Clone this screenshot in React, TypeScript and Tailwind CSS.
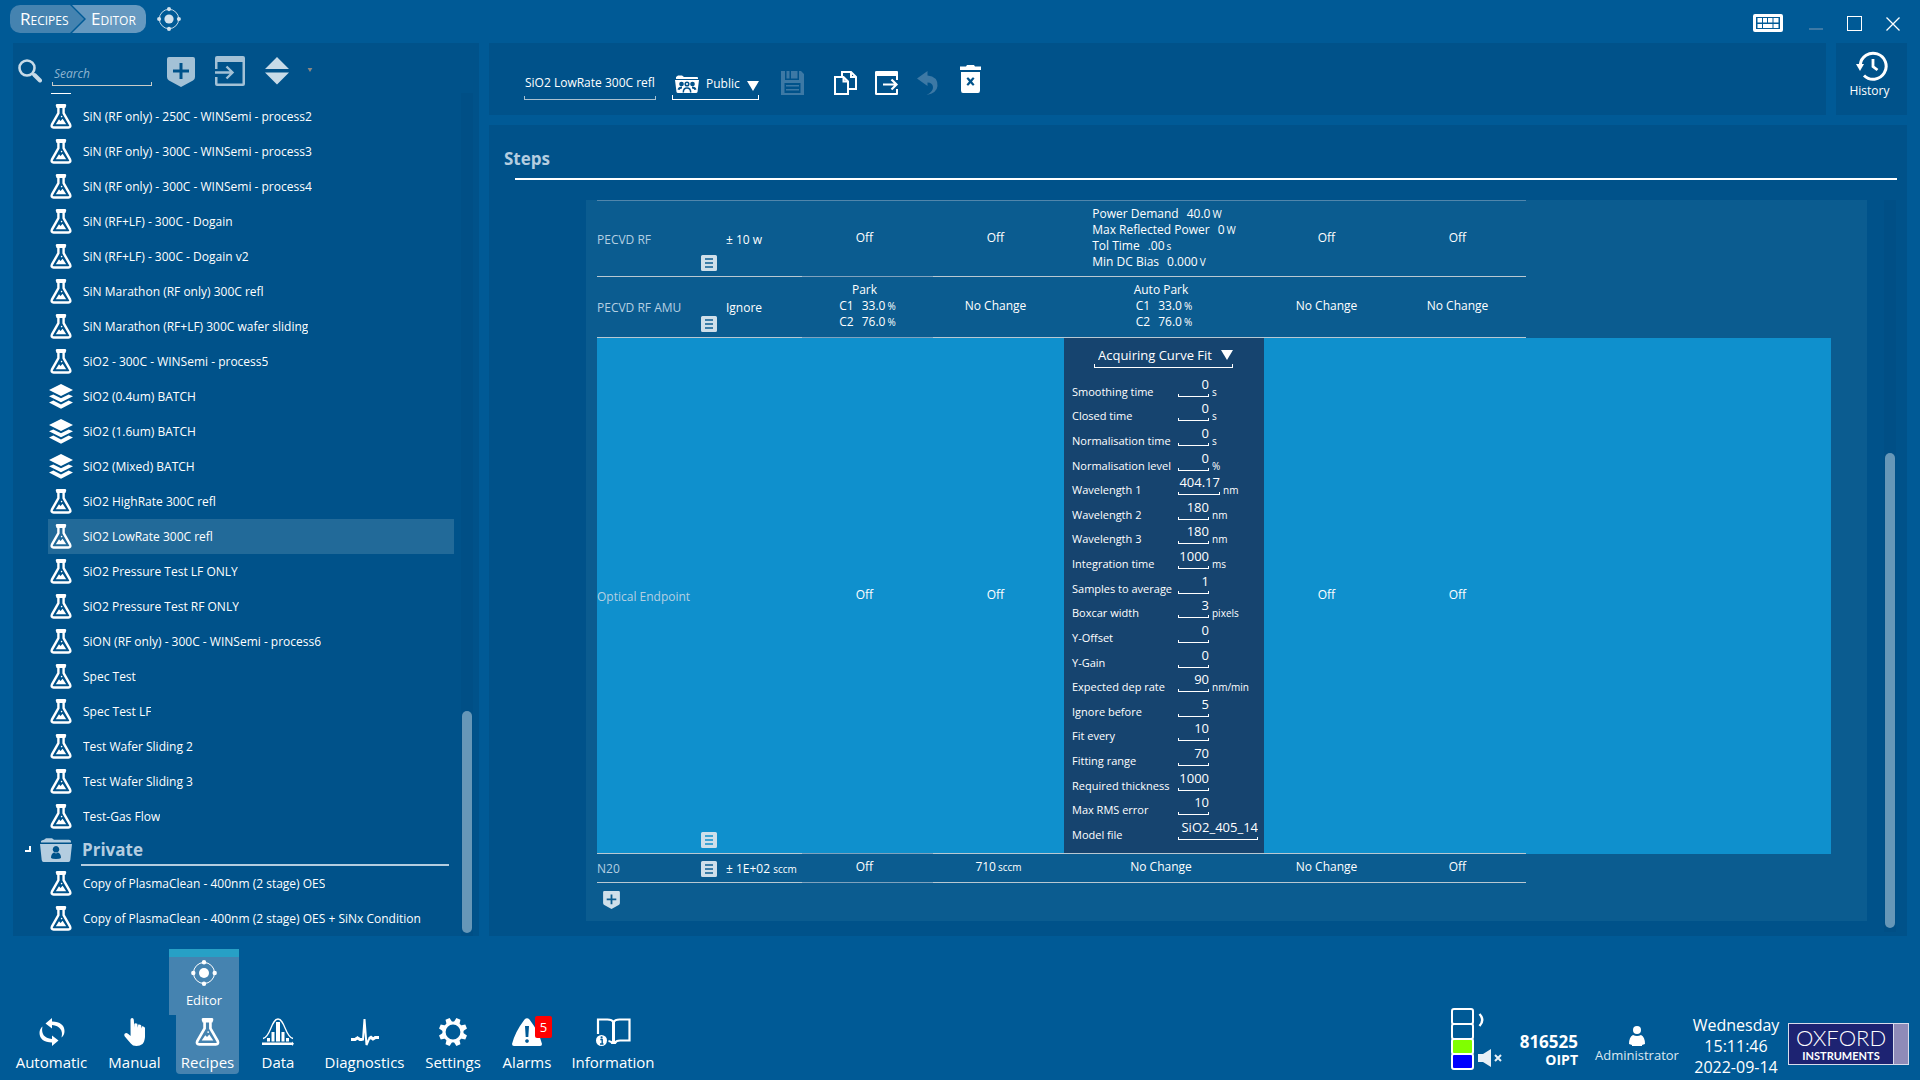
import React from "react";

/* ---------- icons ---------- */

type IconProps = { className?: string };

const Flask = ({ className = "" }: IconProps) => (
  <svg viewBox="0 0 22 25" className={className} fill="none" aria-hidden="true">
    <path d="M8.4 2.5V9.2L1.9 20.6Q.8 23.4 3.6 23.5H18.4Q21.2 23.4 20.1 20.6L13.6 9.2V2.5" stroke="currentColor" strokeWidth="2.4" />
    <path d="M6.8 0H15.2Q16.4 0 16.2 1.8L15.4 4H6.6L5.8 1.8Q5.6 0 6.8 0Z" fill="currentColor" />
    <path d="M5.8 20.2L9 15.3L10.6 17L12.6 14.8L16.2 20.2Z" fill="currentColor" />
    <circle cx="11.6" cy="12.6" r=".8" fill="currentColor" />
  </svg>
);

const Layers = ({ className = "" }: IconProps) => (
  <svg viewBox="0 0 24 25" className={className} fill="currentColor" aria-hidden="true">
    <path d="M12 0L24 6L12 12L0 6Z" />
    <path d="M0 12.3L4.3 10.4L12 14.2L19.7 10.4L24 12.3L12 18.3Z" />
    <path d="M0 18.6L4.3 16.6L12 20.5L19.7 16.6L24 18.6L12 24.8Z" />
  </svg>
);

const Orbit = ({ className = "" }: IconProps) => (
  <svg viewBox="0 0 26 26" className={className} aria-hidden="true">
    <circle cx="13" cy="13" r="10.5" fill="none" stroke="currentColor" strokeWidth="1" />
    <g fill="currentColor">
      <circle cx="13" cy="13" r="5" />
      <circle cx="13" cy="2.3" r="2.2" />
      <circle cx="13" cy="23.7" r="2.2" />
      <circle cx="2.3" cy="13" r="2.2" />
      <circle cx="23.7" cy="13" r="2.2" />
    </g>
  </svg>
);

const Shield = ({ className = "" }: IconProps) => (
  <svg viewBox="0 0 28 30" className={className} fill="currentColor" aria-hidden="true">
    <path fillRule="evenodd" d="M2 0H26Q28 0 28 2V20Q28 22.5 26 23.5L14 30L2 23.5Q0 22.5 0 20V2Q0 0 2 0ZM12.5 6V12.5H6V15.5H12.5V22H15.5V15.5H22V12.5H15.5V6Z" />
  </svg>
);

const Note = ({ className = "" }: IconProps) => (
  <svg viewBox="0 0 16 16" className={className} fill="currentColor" aria-hidden="true">
    <path fillRule="evenodd" d="M1.5 0H14.5Q16 0 16 1.5V14.5Q16 16 14.5 16H1.5Q0 16 0 14.5V1.5Q0 0 1.5 0ZM4 3.3V4.7H12V3.3ZM4 7.3V8.7H12V7.3ZM4 11.3V12.7H12V11.3Z" />
  </svg>
);

const Triangle = ({ className = "" }: IconProps) => (
  <svg viewBox="0 0 12 10" className={className} fill="currentColor" aria-hidden="true">
    <path d="M0 0H12L6 10Z" />
  </svg>
);

const SearchIcon = () => (
  <svg viewBox="0 0 24 24" className="size-6" fill="none" stroke="currentColor" aria-hidden="true">
    <circle cx="9" cy="9" r="7.5" strokeWidth="2.6" />
    <path d="M14 14.5L16 16.5" strokeWidth="2" />
    <path d="M16.5 16L22 21.5" strokeWidth="4" strokeLinecap="round" />
  </svg>
);

const ImportIcon = () => (
  <svg viewBox="0 0 30 30" className="size-[30px]" aria-hidden="true">
    <path fillRule="evenodd" fill="currentColor" d="M0 13V2Q0 0 2 0H28Q30 0 30 2V28Q30 30 28 30H2Q0 30 0 28V21H2.5V27.5H27.5V6H2.5V13Z" />
    <path d="M0 16.5H16M11.5 10.5L17.5 16.5L11.5 22.5" fill="none" stroke="currentColor" strokeWidth="2.4" />
  </svg>
);

const SortIcon = () => (
  <svg viewBox="0 0 24 28" className="h-7 w-6" fill="currentColor" aria-hidden="true">
    <path d="M12 0L24 12H0ZM0 15.5H24L12 27.5Z" />
  </svg>
);

const KeyboardIcon = () => (
  <svg viewBox="0 0 30 18" className="h-[18px] w-[30px]" aria-hidden="true">
    <path fill="currentColor" fillRule="evenodd" d="M2 0H28Q30 0 30 2V16Q30 18 28 18H2Q0 18 0 16V2Q0 0 2 0ZM3 3V15H27V3Z" />
    <path fill="currentColor" d="M4.5 4H9V8.5H4.5ZM10 4H14V8.5H10ZM15 4H19.5V8.5H15ZM20.5 4H25.5V8.5H20.5ZM4.5 10H9V14H4.5ZM10 10H19.5V14H10ZM20.5 10H25.5V14H20.5Z" />
  </svg>
);

const GroupFolder = () => (
  <svg viewBox="0 0 24 20" className="h-5 w-6 shrink-0" fill="currentColor" aria-hidden="true">
    <path d="M1 4V3L3 1.5H7L9 3H22Q23 3 23 4V5H1Z" />
    <path fillRule="evenodd" d="M0 6H24L22.500 18Q22.3 19 21 19H3Q1.700 19 1.500 18Z" mask="url(#group-folder-cut)" />
    <mask id="group-folder-cut">
      <rect width="24" height="20" fill="#fff" />
      <g fill="none" stroke="#000" strokeWidth="1.5">
        <circle cx="12" cy="10" r="1.800" />
        <circle cx="6.500" cy="10" r="1.600" fill="#000" />
        <circle cx="17.500" cy="10" r="1.600" fill="#000" />
        <path d="M8.300 18.500Q8.300 14 12 14T15.700 18.500" />
        <path d="M3.500 15.800Q4 13.500 7 13.500M20.500 15.800Q20 13.500 17 13.500" strokeWidth="2" />
      </g>
    </mask>
  </svg>
);

const UserFolder = () => (
  <svg viewBox="0 0 32 24" className="h-6 w-8 shrink-0" fill="currentColor" aria-hidden="true">
    <path d="M1 4.5V3Q2 2 4 1.8L6 .3H12L14 1.8H29Q31 2 31 3.5V4.5Z" />
    <path fillRule="evenodd" d="M0 6H32L30.3 22Q30 24 28.5 24H3.5Q2 24 1.7 22ZM16 8A3.3 3.3 0 1 0 16.01 8ZM11 20Q11 15.5 14 14.5L16 15.5L18 14.5Q21 15.5 21 20Q20 21 16 21T11 20Z" />
  </svg>
);

const SaveIcon = () => (
  <svg viewBox="0 0 23 24" className="h-6 w-[23px]" fill="currentColor" aria-hidden="true">
    <path fillRule="evenodd" d="M0 0H4V9H18V0H20L23 3V24H0ZM3.5 12V22H19.5V12ZM5 14H18V15.5H5ZM5 18H18V19.5H5Z" />
    <path d="M5.5 0H8.5V7.5H5.5ZM10 0H16.5V7.5H10Z" />
  </svg>
);

const CopyIcon = () => (
  <svg viewBox="0 0 23 24" className="h-6 w-[23px]" fill="none" stroke="currentColor" strokeWidth="2" aria-hidden="true">
    <path d="M1 6H9.5L14 10.5V23H1ZM9.5 6V10.5H14" />
    <path d="M8 5V1H17L22 6V18H15M17 1V6H22" />
  </svg>
);

const ExportIcon = () => (
  <svg viewBox="0 0 24 24" className="size-6" aria-hidden="true">
    <path fillRule="evenodd" fill="currentColor" d="M1.5 0H22Q23 0 23 1V9H21V5H2V22H21V18H23V23Q23 24 22 24H1.5Q0 24 0 23V1Q0 0 1.5 0Z" />
    <path d="M8 13.5H21M16.5 8.5L21.5 13.5L16.5 18.5" fill="none" stroke="currentColor" strokeWidth="2.2" />
  </svg>
);

const UndoIcon = () => (
  <svg viewBox="0 0 21 24" className="h-6 w-[21px]" fill="currentColor" aria-hidden="true">
    <path d="M0 7.5L10.5 0V4.5Q21 5.5 20.5 15Q20 22 9.5 24Q16.5 20.5 16 16Q15.5 11.500 10.500 11.500V15Z" />
  </svg>
);

const TrashIcon = () => (
  <svg viewBox="0 0 21 28" className="h-7 w-[21px]" fill="currentColor" aria-hidden="true">
    <path d="M0 1.5H6L7 0H14L15 1.5H21V5H0Z" />
    <path fillRule="evenodd" d="M1 7H20V25.5Q20 28 18 28H3Q1 28 1 25.5ZM7.500 12.500L6.500 13.500L9 16.500L6.500 19.500L7.500 20.500H8.500L10.500 18.200L12.500 20.500H13.500L14.500 19.500L12 16.500L14.500 13.500L13.500 12.500H12.500L10.500 14.800L8.500 12.500Z" />
  </svg>
);

const HistoryIcon = () => (
  <svg viewBox="0 0 32 30" className="ml-1 h-[30px] w-8" fill="none" stroke="currentColor" aria-hidden="true">
    <path d="M4.2 14A13 13 0 1 1 8 24.5" strokeWidth="3" />
    <path d="M17 8V15.5L21.5 19" strokeWidth="2.8" />
    <path d="M0 13H8L4 20Z" fill="currentColor" stroke="none" />
  </svg>
);

const AutomaticIcon = () => (
  <svg viewBox="0 0 26 28" className="h-7 w-[26px]" fill="currentColor" aria-hidden="true">
    <path d="M6.500 5.500L13 0V3.500Q25.300 4 25.500 13Q25.500 17 22.500 19.500Q25 8.500 13 7V10.500Z" />
    <path d="M19.500 22.500L13 28V24.500Q.7 24 .5 15Q.5 11 3.500 8.500Q1 19.500 13 21V17.500Z" />
  </svg>
);

const HandIcon = () => (
  <svg viewBox="0 0 22 28" className="h-7 w-[22px]" fill="currentColor" aria-hidden="true">
    <path d="M6.5 1.8Q6.6 0 8.1 0T9.8 1.8L10.4 9.5V5.7Q11.5 4.8 13.3 5.8L13.8 9.8L14.2 6.6Q15.7 6 17.2 7.2L17.3 10.5L18 8.2Q20 8 21 9.8V19Q20.5 24 18.5 26Q16 28 12.5 28Q8.5 28 6.8 25.5L.8 18.5Q-.3 16.5 1 15.5T4.3 16L6.6 18Z" />
  </svg>
);

const DataIcon = () => (
  <svg viewBox="0 0 32 28" className="h-7 w-8" fill="currentColor" aria-hidden="true">
    <path d="M0 24.5H30V23.500L32 25.700L30 28V27H0Z" />
    <path d="M5 20H8V23.5H5ZM9.5 14H12.5V23.5H9.5ZM14 4H18V23.5H14ZM19.5 14H22.5V23.5H19.5ZM24 20H27V23.5H24Z" />
    <path d="M1 20.5C9 19 9 1 16 1S23 19 31 20.5" fill="none" stroke="currentColor" strokeWidth="1.3" />
  </svg>
);

const PulseIcon = () => (
  <svg viewBox="0 0 28 28" className="size-7" fill="none" stroke="currentColor" aria-hidden="true">
    <path d="M0 21.5H4L6.5 19.5L9 21.5H12L13.5 1L15.5 27L18 21L20 19L22 21L24.5 19L28 19.5" strokeWidth="2" />
    <path d="M0 21.5H4L6.5 20L9 21.5H11.5M18 20.500L20 19.500L22 21L24.500 19.500H28" strokeWidth="3" />
  </svg>
);

const GearIcon = () => (
  <svg viewBox="-14 -14 28 28" className="size-7" fill="currentColor" aria-hidden="true">
    <circle r="9" fill="none" stroke="currentColor" strokeWidth="3.2" />
    {[22.5, 67.5, 112.5, 157.5, 202.5, 247.5, 292.5, 337.5].map((a) => (
      <path key={a} d="M-2.2 -14.2H2.2L3 -9.5H-3Z" transform={`rotate(${a})`} />
    ))}
  </svg>
);

const AlarmIcon = () => (
  <svg viewBox="0 0 30 28" className="h-7 w-[30px]" fill="currentColor" aria-hidden="true">
    <path fillRule="evenodd" d="M12.5 1.5Q15 -1 17.5 1.5Q27 14 30 26Q30 27.8 28 28H2Q0 27.8 0 26Q3 14 12.5 1.5ZM13 8L13.7 19H16.3L17 8ZM15 21.2A1.8 1.8 0 1 0 15.01 21.2Z" />
  </svg>
);

const BookIcon = () => (
  <svg viewBox="0 0 35 28" className="h-7 w-[35px]" aria-hidden="true">
    <path d="M2 16V1.5H11.5Q16 1.5 17.5 4Q19 1.5 23.5 1.5H33.5V22.5H24Q20 22.5 19 25H16Q15.5 23.5 12.5 23" fill="none" stroke="currentColor" strokeWidth="2.2" />
    <path d="M16 3H19V25H16Z" fill="currentColor" />
    <circle cx="5.5" cy="22.5" r="5.5" fill="currentColor" />
    <path d="M4.3 21.5H6.2V26M4 26H7.5" stroke="#005a96" strokeWidth="1.4" fill="none" />
    <circle cx="5.6" cy="19.3" r="1.1" fill="#005a96" />
  </svg>
);

const LightTower = () => (
  <svg viewBox="0 0 52 62" className="h-[62px] w-[52px]" aria-hidden="true">
    <g stroke="#fff" strokeWidth="2">
      <rect x="1" y="1" width="21" height="15" rx="2" fill="none" />
      <rect x="1" y="16" width="21" height="15" rx="2" fill="none" />
      <rect x="1" y="31" width="21" height="15" rx="2" fill="#80ff00" />
      <rect x="1" y="46" width="21" height="15" rx="2" fill="#0000ff" />
    </g>
    <path d="M28.500 6Q34 12 28.500 18" fill="none" stroke="#fff" strokeWidth="2.4" />
    <path d="M27 46H32L40 41V59L32 54H27Z" fill="#e8f0f6" />
    <path d="M44 47L50 53M50 47L44 53" stroke="#e8f0f6" strokeWidth="2" />
  </svg>
);

const PersonIcon = () => (
  <svg viewBox="0 0 16 20" className="h-5 w-4" fill="currentColor" aria-hidden="true">
    <circle cx="8" cy="4" r="4" />
    <path d="M4 9Q8 11 12 9Q16 11 16 18L13 19V20H3V19L0 18Q0 11 4 9Z" />
  </svg>
);

/* ---------- shared parts ---------- */

const Bracket = ({ className = "border-white" }: IconProps) => (
  <span aria-hidden="true" className={`block border-x border-b ${className}`} />
);

/* ---------- data ---------- */

const recipes: { name: string; batch?: boolean; selected?: boolean }[] = [
  { name: "SiN (RF only) - 250C - WINSemi - process2" },
  { name: "SiN (RF only) - 300C - WINSemi - process3" },
  { name: "SiN (RF only) - 300C - WINSemi - process4" },
  { name: "SiN (RF+LF) - 300C - Dogain" },
  { name: "SiN (RF+LF) - 300C - Dogain v2" },
  { name: "SiN Marathon (RF only) 300C refl" },
  { name: "SiN Marathon (RF+LF) 300C wafer sliding" },
  { name: "SiO2 - 300C - WINSemi - process5" },
  { name: "SiO2 (0.4um) BATCH", batch: true },
  { name: "SiO2 (1.6um) BATCH", batch: true },
  { name: "SiO2 (Mixed) BATCH", batch: true },
  { name: "SiO2 HighRate 300C refl" },
  { name: "SiO2 LowRate 300C refl", selected: true },
  { name: "SiO2 Pressure Test LF ONLY" },
  { name: "SiO2 Pressure Test RF ONLY" },
  { name: "SiON (RF only) - 300C - WINSemi - process6" },
  { name: "Spec Test" },
  { name: "Spec Test LF" },
  { name: "Test Wafer Sliding 2" },
  { name: "Test Wafer Sliding 3" },
  { name: "Test-Gas Flow" },
];

const privateRecipes = [
  { name: "Copy of PlasmaClean - 400nm (2 stage) OES" },
  { name: "Copy of PlasmaClean - 400nm (2 stage) OES + SiNx Condition" },
];

const fields: { label: string; value: string; unit?: string; width?: string }[] = [
  { label: "Smoothing time", value: "0", unit: "s" },
  { label: "Closed time", value: "0", unit: "s" },
  { label: "Normalisation time", value: "0", unit: "s" },
  { label: "Normalisation level", value: "0", unit: "%" },
  { label: "Wavelength 1", value: "404.17", unit: "nm", width: "w-[42px]" },
  { label: "Wavelength 2", value: "180", unit: "nm" },
  { label: "Wavelength 3", value: "180", unit: "nm" },
  { label: "Integration time", value: "1000", unit: "ms" },
  { label: "Samples to average", value: "1" },
  { label: "Boxcar width", value: "3", unit: "pixels" },
  { label: "Y-Offset", value: "0" },
  { label: "Y-Gain", value: "0" },
  { label: "Expected dep rate", value: "90", unit: "nm/min" },
  { label: "Ignore before", value: "5" },
  { label: "Fit every", value: "10" },
  { label: "Fitting range", value: "70" },
  { label: "Required thickness", value: "1000" },
  { label: "Max RMS error", value: "10" },
  { label: "Model file", value: "SiO2_405_14", width: "w-20" },
];

/* ---------- recipe list ---------- */

const RecipeRow = ({ name, batch, selected }: { name: string; batch?: boolean; selected?: boolean }) => (
  <li className="pl-[35px] pr-[7px]">
    <button className={`flex h-[35px] w-full items-center text-left text-xs ${selected ? "bg-[#226a99]" : ""}`}>
      <span className="flex w-[35px] shrink-0 pl-px">
        {batch ? <Layers className="h-[25px] w-6" /> : <Flask className="ml-px h-[25px] w-[22px]" />}
      </span>
      <span className="truncate">{name}</span>
    </button>
  </li>
);

const Sidebar = () => (
  <aside className="flex w-[466px] shrink-0 flex-col bg-[#00528a]">
    <div className="flex h-[50px] items-start pl-[5px] pt-[13px] text-[#c8dbe8]">
      <label htmlFor="search" className="mt-[3px]">
        <SearchIcon />
        <span className="sr-only">Search recipes</span>
      </label>
      <div className="ml-2.5 mt-1.5 w-[100px]">
        <input id="search" placeholder="Search" className="block h-5 w-full bg-transparent pl-0.5 pt-0.5 text-xs italic text-white outline-none placeholder:text-[#8db4d0]" />
        <Bracket className="h-1 border-[#c9ccc8]" />
      </div>
      <button aria-label="Add recipe" className="ml-[15px] mt-px text-[#a3c1d6]"><Shield className="h-[30px] w-7" /></button>
      <button aria-label="Import recipe" className="ml-5 text-[#a3c1d6]"><ImportIcon /></button>
      <button aria-label="Sort recipes" className="ml-5 mt-px"><SortIcon /></button>
      <button aria-label="Sort options" className="ml-[18px] mt-3 text-[#8c8781]"><Triangle className="h-1 w-1.5" /></button>
    </div>
    <div className="flex flex-1">
      <div className="min-w-0 flex-1">
        <div className="flex h-1.5 pl-[38px]"><span className="h-px w-5 bg-white" /></div>
        <ul>
          {recipes.map((r) => <RecipeRow key={r.name} {...r} />)}
        </ul>
        <div className="flex h-8 items-start pl-3 pr-3 text-[#b4cde0]">
          <span aria-hidden="true" className="mt-3 size-1.5 border-b-2 border-r-2 border-white" />
          <span className="ml-[9px] mt-1 flex"><UserFolder /></span>
          <h2 className="ml-[9px] flex-1 border-b-2 border-[#b4cde0] pl-px pt-0.5 text-[17px] font-bold leading-7">Private</h2>
        </div>
        <ul>
          {privateRecipes.map((r) => <RecipeRow key={r.name} {...r} />)}
        </ul>
      </div>
      <div className="mr-1.5 flex w-3 flex-col items-center justify-end bg-[#004f86] pb-[3px]">
        <div className="h-[222px] w-2.5 rounded-full bg-[#6697b8]" />
      </div>
    </div>
  </aside>
);

/* ---------- recipe toolbar ---------- */

const RecipeToolbar = () => (
  <div className="flex h-[72px] flex-1 items-start bg-[#00528a] pl-[35px] pt-[22px]">
    <div className="mt-[7px] w-[132px]">
      <input aria-label="Recipe name" defaultValue="SiO2 LowRate 300C refl" className="block h-5 w-full bg-transparent pl-px text-xs outline-none" />
      <Bracket className="mt-1 h-1 border-[#a9c0d0]" />
    </div>
    <div className="ml-4 mt-2 w-[87px]">
      <div className="relative flex h-[22px] items-center">
        <span className="ml-[3px] flex"><GroupFolder /></span>
        <select aria-label="Visibility" className="h-[22px] min-w-0 flex-1 appearance-none bg-transparent pl-[7px] text-xs outline-none">
          <option className="bg-[#00528a]">Public</option>
          <option className="bg-[#00528a]">Private</option>
        </select>
        <Triangle className="pointer-events-none absolute right-0 top-2 h-2.5 w-3" />
      </div>
      <Bracket className="h-[5px]" />
    </div>
    <button aria-label="Save" className="ml-[22px] mt-1.5 text-[#3d79a5]"><SaveIcon /></button>
    <button aria-label="Copy" className="ml-[30px] mt-1.5"><CopyIcon /></button>
    <button aria-label="Export" className="ml-[18px] mt-1.5"><ExportIcon /></button>
    <button aria-label="Undo" className="ml-[18px] mt-1.5 text-[#3d79a5]"><UndoIcon /></button>
    <button aria-label="Delete" className="ml-[22px]"><TrashIcon /></button>
  </div>
);

/* ---------- step table ---------- */

const Measure = ({ label, value, unit }: { label: string; value: string; unit: string }) => (
  <div className="pl-1.5">
    {label}<span className="ml-2">{value}</span><span className="ml-0.5 text-[10px]">{unit}</span>
  </div>
);

const noteCell = "border-b border-[#b9c8d2] pb-[5px] align-bottom";
const labelCell = "border-b border-[#b9c8d2] pt-0.5 text-left font-normal whitespace-nowrap text-[#b4cfe2]";
const tolCell = "border-b border-[#b9c8d2] pt-0.5 whitespace-nowrap";
const dimCell = "border-b border-[#7fa2be] pr-1.5 pb-0.5 text-center";
const valueCell = "border-b border-[#b9c8d2] pr-1.5 pb-0.5 text-center";

const NoteButton = ({ row }: { row: string }) => (
  <button aria-label={`Notes for ${row}`} className="block text-[#cfdfea]"><Note className="size-4" /></button>
);

const EndpointForm = () => (
  <div className="pb-2.5 pl-2 pt-2 text-left">
    <div className="relative ml-[22px] w-[139px]">
      <select aria-label="Endpoint mode" className="block h-[18px] w-full appearance-none bg-transparent pl-1 text-[13px] leading-[18px] outline-none">
        <option className="bg-[#16446f]">Acquiring Curve Fit</option>
        <option className="bg-[#16446f]">Off</option>
      </select>
      <Triangle className="pointer-events-none absolute right-0 top-1 h-2.5 w-3" />
      <Bracket className="h-1" />
    </div>
    <div className="mt-[7px] flex h-[468px] flex-col">
      {fields.map((f, i) => (
        <div key={f.label} className="flex flex-1 items-end whitespace-nowrap">
          <label htmlFor={`field-${i}`} className="w-[106px] shrink-0 text-[11px] leading-4">{f.label}</label>
          <div className={`mb-[3px] shrink-0 ${f.width ?? "w-[31px]"}`}>
            <input id={`field-${i}`} defaultValue={f.value} className="block h-[17px] w-full bg-transparent text-right text-[13px] leading-[17px] outline-none" />
            <Bracket className="mt-px h-[3px]" />
          </div>
          <span className="ml-[3px] text-[10px] leading-[15px]">{f.unit}</span>
        </div>
      ))}
    </div>
  </div>
);

const StepTable = () => (
  <table className="w-full table-fixed border-separate border-spacing-0 text-xs leading-4">
    <colgroup>
      <col className="w-[104px]" />
      <col className="w-[25px]" />
      <col className="w-[76px]" />
      <col className="w-[131px]" />
      <col className="w-[131px]" />
      <col className="w-[200px]" />
      <col className="w-[131px]" />
      <col className="w-[131px]" />
      <col />
    </colgroup>
    <tbody>
      <tr className="h-[77px] [&>*:not(:last-child)]:border-t [&>*]:border-t-[#5186ac]">
        <th scope="row" className={labelCell}>PECVD RF</th>
        <td className={noteCell}><NoteButton row="PECVD RF" /></td>
        <td className={tolCell}>± 10 w</td>
        <td className={dimCell}>Off</td>
        <td className={valueCell}>Off</td>
        <td className={valueCell}>
          <div className="inline-block text-left align-middle">
            <Measure label="Power Demand" value="40.0" unit="W" />
            <Measure label="Max Reflected Power" value="0" unit="W" />
            <Measure label="Tol Time" value=".00" unit="s" />
            <Measure label="Min DC Bias" value="0.000" unit="V" />
          </div>
        </td>
        <td className={valueCell}>Off</td>
        <td className={valueCell}>Off</td>
        <td />
      </tr>
      <tr className="h-[61px]">
        <th scope="row" className={labelCell}>PECVD RF AMU</th>
        <td className={noteCell}><NoteButton row="PECVD RF AMU" /></td>
        <td className={tolCell}>Ignore</td>
        <td className={dimCell}>
          <div>Park</div>
          <Measure label="C1" value="33.0" unit="%" />
          <Measure label="C2" value="76.0" unit="%" />
        </td>
        <td className={valueCell}>No Change</td>
        <td className={valueCell}>
          <div>Auto Park</div>
          <Measure label="C1" value="33.0" unit="%" />
          <Measure label="C2" value="76.0" unit="%" />
        </td>
        <td className={valueCell}>No Change</td>
        <td className={valueCell}>No Change</td>
        <td />
      </tr>
      <tr className="bg-[#0f90cd]">
        <th scope="row" className={labelCell}>Optical Endpoint</th>
        <td className={noteCell}><NoteButton row="Optical Endpoint" /></td>
        <td className={tolCell} />
        <td className={dimCell}>Off</td>
        <td className={valueCell}>Off</td>
        <td className="border-b border-[#b9c8d2] bg-[#16446f]"><EndpointForm /></td>
        <td className={valueCell}>Off</td>
        <td className={valueCell}>Off</td>
        <td />
      </tr>
      <tr className="h-[29px]">
        <th scope="row" className={labelCell}>N20</th>
        <td className={noteCell}><NoteButton row="N20" /></td>
        <td className={tolCell}>± 1E+02 <span className="text-[10px]">sccm</span></td>
        <td className={dimCell}>Off</td>
        <td className={valueCell}><span className="pl-1.5">710</span><span className="ml-0.5 text-[10px]">sccm</span></td>
        <td className={valueCell}>No Change</td>
        <td className={valueCell}>No Change</td>
        <td className={valueCell}>Off</td>
        <td />
      </tr>
    </tbody>
  </table>
);

const StepsPanel = () => (
  <section className="flex flex-1 flex-col bg-[#00528a] pb-1 pr-2.5">
    <h1 className="pl-[15px] pt-[21px] text-[17px] font-bold leading-[26px] text-[#b4cde0]">Steps</h1>
    <div className="ml-[26px] mt-1.5 h-0.5 bg-white" />
    <div className="ml-[97px] mt-5 flex flex-1">
      <div className="mb-[11px] min-w-0 flex-1 bg-[#0b5c90] pb-3 pl-[11px] pr-9">
        <StepTable />
        <button aria-label="Add device" className="ml-1.5 mt-2 block text-[#cfdfea]"><Shield className="h-[18px] w-[17px]" /></button>
      </div>
      <div className="ml-[17px] mr-px flex w-3 flex-col items-center justify-end bg-[#004f86] pb-1">
        <div className="h-[475px] w-2.5 rounded-full bg-[#6697b8]" />
      </div>
    </div>
  </section>
);

/* ---------- title bar and footer ---------- */

const TitleBar = () => (
  <header className="flex h-[43px] items-start pl-2.5 pt-[5px]">
    <nav aria-label="Breadcrumb" className="flex h-7 overflow-hidden rounded-[10px] text-[17px] leading-7 [font-variant:small-caps]">
      <a href="#recipes" className="w-[74px] bg-[#4583b0] pl-2.5 [clip-path:polygon(0_0,60px_0,74px_50%,60px_100%,0_100%)]">Recipes</a>
      <a href="#editor" className="-ml-3 w-[74px] bg-[#6699c0] pl-[19px] [clip-path:polygon(0_0,100%_0,100%_100%,0_100%,14px_50%)]">Editor</a>
    </nav>
    <button aria-label="Editor view" className="ml-[11px] mt-0.5 text-[#d3e2ed]"><Orbit className="size-6" /></button>
    <div className="ml-auto flex pr-5">
      <button aria-label="Keyboard" className="mt-[9px]"><KeyboardIcon /></button>
      <button aria-label="Minimise" className="ml-[26px] mt-[23px] h-0.5 w-3.5 self-start bg-[#3d79a5]" />
      <button aria-label="Maximise" className="ml-6 mt-[11px] size-[15px] border border-white" />
      <button aria-label="Close" className="ml-6 mt-[11px]">
        <svg viewBox="0 0 14 14" className="size-3.5" stroke="currentColor" strokeWidth="1.3" aria-hidden="true"><path d="M.5 .5L13.5 13.5M13.5 .5L.5 13.5" /></svg>
      </button>
    </div>
  </header>
);

const navItems = [
  { label: "Automatic", icon: <AutomaticIcon />, width: "w-[83px]" },
  { label: "Manual", icon: <HandIcon />, width: "w-[83px]" },
  { label: "Recipes", icon: <Flask className="h-7 w-[25px]" />, width: "w-[63px]" },
  { label: "Data", icon: <DataIcon />, width: "w-[78px]" },
  { label: "Diagnostics", icon: <PulseIcon />, width: "w-[95px]" },
  { label: "Settings", icon: <GearIcon />, width: "w-[82px]" },
  { label: "Alarms", icon: <AlarmIcon />, width: "w-[66px]" },
  { label: "Information", icon: <BookIcon />, width: "w-[106px]" },
];

const Footer = () => (
  <footer className="flex h-36 items-end justify-between pl-2.5 pr-[11px]">
    <nav aria-label="Main" className="mb-1.5 flex">
      {navItems.map(({ label, icon, width }) => (
        <div key={label} className={`relative ${width}`}>
          <button className={`flex w-full flex-col items-center gap-1 pt-[3px] text-[15px] leading-6 ${label === "Recipes" ? "rounded-b bg-[#4583b0]" : ""}`}>
            {icon}
            {label}
          </button>
          {label === "Alarms" && (
            <span className="absolute right-2 top-px h-[22px] w-[17px] rounded-xs bg-[#ff0000] text-center text-[13px] leading-[22px]">5</span>
          )}
          {label === "Recipes" && (
            <button className="absolute bottom-full right-0 flex h-[66px] w-[70px] flex-col items-center border-t-8 border-[#27a0c6] bg-[#4583b0] pt-[3px] text-[13px]">
              <Orbit className="size-[26px]" />
              <span className="mt-1 leading-5">Editor</span>
            </button>
          )}
        </div>
      ))}
    </nav>
    <div className="flex items-end">
      <span className="mb-2.5"><LightTower /></span>
      <div className="mb-3 ml-[7px] w-[68px] text-right font-bold">
        <div className="text-[17px] leading-5">816525</div>
        <div className="text-sm leading-4">OIPT</div>
      </div>
      <button className="mb-[15px] ml-4 flex w-[86px] flex-col items-center text-[13px] leading-[19px] text-[#dce8f1]">
        <span className="text-white"><PersonIcon /></span>
        Administrator
      </button>
      <div className="mb-0.5 ml-2.5 w-[92px] text-center text-base leading-[21px]">
        <div>Wednesday</div>
        <div>15:11:46</div>
        <div>2022-09-14</div>
      </div>
      <div className="mb-[15px] ml-1.5 flex h-[42px] w-[121px] border border-[#d8dcec] bg-[#1d2372] font-['Lato',sans-serif]">
        <div className="flex flex-1 flex-col items-center justify-center">
          <span className="text-[22px] font-light leading-6">OXFORD</span>
          <span className="text-[11px] font-bold leading-3">INSTRUMENTS</span>
        </div>
        <div className="w-[15px] border-l border-[#d8dcec] bg-[#8f8bb8]" />
      </div>
    </div>
  </footer>
);

export default function App() {
  return (
    <div className="flex min-h-screen flex-col bg-[#005a96] font-['Open_Sans','Noto_Sans',sans-serif] text-white">
      <TitleBar />
      <main className="flex flex-1 gap-2.5 px-[13px]">
        <Sidebar />
        <div className="flex min-w-0 flex-1 flex-col gap-2.5">
          <div className="flex gap-2.5">
            <RecipeToolbar />
            <button className="flex h-[72px] w-[71px] flex-col items-center bg-[#00528a] pr-1 pt-2 text-xs leading-5">
              <HistoryIcon />
              History
            </button>
          </div>
          <StepsPanel />
        </div>
      </main>
      <Footer />
    </div>
  );
}
